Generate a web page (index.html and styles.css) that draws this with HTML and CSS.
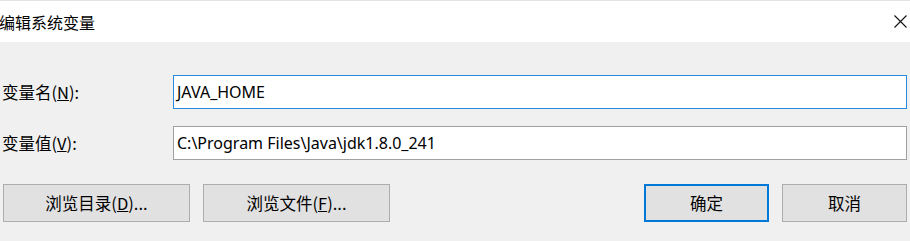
FILE: index.html
```html
<!DOCTYPE html>
<html lang="zh-CN">
<head>
<meta charset="utf-8">
<title>编辑系统变量</title>
<link rel="stylesheet" href="styles.css">
</head>
<body>
<div class="dialog">
  <div class="titlebar">
    <span class="title">编辑系统变量</span>
    <svg class="close" width="13" height="13" viewBox="0 0 13 13"><path d="M0.5 0.5 L12.5 12.5 M12.5 0.5 L0.5 12.5" stroke="#111" stroke-width="1.1" fill="none"/></svg>
  </div>
  <div class="content">
    <div class="fields">
      <label class="label">变量名(<u>N</u>):</label>
      <div class="input focused">JAVA_HOME</div>
      <label class="label">变量值(<u>V</u>):</label>
      <div class="input">C:\Program Files\Java\jdk1.8.0_241</div>
    </div>
    <div class="buttons">
      <button class="btn wide">浏览目录(<u>D</u>)...</button>
      <button class="btn wide">浏览文件(<u>F</u>)...</button>
      <div class="spacer"></div>
      <button class="btn narrow default">确定</button>
      <button class="btn narrow">取消</button>
    </div>
  </div>
</div>
</body>
</html>
```
FILE: styles.css
```css
* { box-sizing: border-box; }
html, body { margin: 0; padding: 0; }
body {
  width: 910px;
  height: 241px;
  overflow: hidden;
  background: #f0f0f0;
  font-family: "Noto Sans", "Noto Sans CJK SC", sans-serif;
  font-size: 16px;
  color: #000;
}
.dialog { width: 910px; }
.titlebar {
  height: 42px;
  background: #fff;
  border-top: 1px solid #e3e3e3;
  display: flex;
  align-items: center;
  justify-content: space-between;
  padding-right: 3px;
}
.title {
  margin-left: -1px;
  font-family: "Noto Sans CJK SC", sans-serif;
  font-size: 16px;
  color: #000;
}
.content {
  padding: 33px 3px 0 2px;
}
.fields {
  display: grid;
  grid-template-columns: 171px 1fr;
  row-gap: 17px;
  align-items: center;
}
.label {
  font-family: "Noto Sans CJK SC", sans-serif;
  font-size: 16.5px;
}
.input {
  height: 34px;
  background: #fff;
  border: 1px solid #a0a0a0;
  padding: 0 3px;
  display: flex;
  align-items: center;
  font-size: 16px;
  white-space: nowrap;
}
.input.focused { border-color: #2a8ae0; }
.buttons {
  display: flex;
  gap: 13px;
  margin-top: 24px;
  padding-left: 1px;
}
.spacer { flex: 1; }
.btn {
  height: 38px;
  background: #e1e1e1;
  border: 1px solid #adadad;
  font-family: "Noto Sans CJK SC", sans-serif;
  font-size: 16.5px;
  color: #000;
  padding: 0;
}
.btn.wide { width: 187px; }
.btn.narrow { width: 125px; }
.btn.default { border: 2px solid #0078d7; }
```
